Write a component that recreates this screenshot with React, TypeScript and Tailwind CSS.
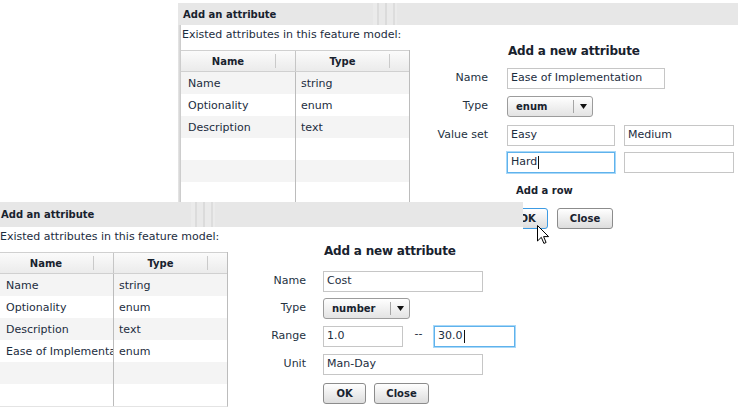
import React from 'react';

type Row = { name: string; type: string };

const TitleBar = ({ height }: { height: string }) => (
  <div className={`flex items-center bg-[#e7e7e7] ${height}`}>
    <span className="w-[195px] pl-[5px] text-[10px] font-bold text-[#18222e]">Add an attribute</span>
    {/* grip strips in the title bar */}
    <div className="flex h-full">
      <span className="w-[4px] bg-[#ebebeb]" />
      <span className="w-[2px] bg-[#dcdcdc]" />
      <span className="w-[6px] bg-[#e9e9e9]" />
      <span className="w-[2px] bg-[#dbdbdb]" />
      <span className="w-[6px] bg-[#eaeaea]" />
      <span className="w-[2px] bg-[#dddddd]" />
      <span className="w-[2px] bg-[#ebebeb]" />
    </div>
  </div>
);

const AttrTable = ({ rows, count, last }: { rows: Row[]; count: number; last?: boolean }) => {
  const all = Array.from({ length: count }, (_, i) => rows[i] ?? { name: '', type: '' });
  return (
    <div className={`w-[229px] border-r border-[#bcbcbc] ${last ? 'border-b border-b-[#e4e4e4]' : ''}`}>
      <div className="flex h-[22px] border-y border-[#d0d0d0] bg-linear-to-b from-[#fbfbfb] to-[#ebebeb] text-[10px] font-bold text-[#18222e]">
        <div className="flex w-[115px] items-center border-r border-[#c6c6c6]">
          <span className="flex-1 text-center">Name</span>
          <span className="h-[14px] w-px bg-[#cacaca]" />
          <span className="w-[19px]" />
        </div>
        <div className="flex flex-1 items-center">
          <span className="flex-1 text-center">Type</span>
          <span className="h-[14px] w-px bg-[#cacaca]" />
          <span className="w-[19px]" />
        </div>
      </div>
      {all.map((r, i) => (
        <div key={i} className={`flex h-[22px] leading-[23px] ${i % 2 === 0 ? 'bg-[#f4f4f4]' : 'bg-white'}`}>
          <div className="w-[115px] overflow-hidden whitespace-nowrap border-r border-[#bcbcbc] pl-[7px] pr-[4px]">{r.name}</div>
          <div className="flex-1 pl-[5px]">{r.type}</div>
        </div>
      ))}
    </div>
  );
};

const Field = ({ value, w, focused, caret }: { value: string; w: string; focused?: boolean; caret?: boolean }) => (
  <div
    className={`flex h-[21px] items-center border bg-white px-[3px] ${w} ${
      focused ? 'border-[#5fb2ec] shadow-[0_0_0_1px_#a8d8f8]' : 'border-[#c6c6c6]'
    }`}
  >
    <span className="whitespace-nowrap">{value}</span>
    {caret && <span className="ml-px h-[13px] w-px bg-[#111]" />}
  </div>
);

const Select = ({ value, w, textW }: { value: string; w: string; textW: string }) => (
  <div className={`flex h-[21px] items-center rounded-[3px] border border-[#9c9c9c] bg-linear-to-b from-white to-[#e3e3e3] ${w}`}>
    <span className={`pl-[8px] text-[10px] font-bold text-[#18222e] ${textW}`}>{value}</span>
    <span className="h-[13px] w-px bg-[#a6a6a6]" />
    <span className="flex flex-1 justify-center">
      <svg width="7" height="5" viewBox="0 0 7 5">
        <polygon points="0,0 7,0 3.5,5" fill="#111" />
      </svg>
    </span>
  </div>
);

const Btn = ({ label, w, focused }: { label: string; w: string; focused?: boolean }) => (
  <div
    className={`flex h-[21px] items-center justify-center rounded-[3px] border bg-linear-to-b from-white to-[#dddddd] text-[10px] font-bold text-[#18222e] ${w} ${
      focused ? 'border-[#3d9be3]' : 'border-[#8c8c8c]'
    }`}
  >
    {label}
  </div>
);

const FormRow = ({ label, gap, mt, children }: { label: string; gap: string; mt: string; children: React.ReactNode }) => (
  <div className={`flex items-center ${gap} ${mt}`}>
    <span className="w-[78px] text-right text-[#24323f]">{label}</span>
    {children}
  </div>
);

const App = () => {
  const rowsA: Row[] = [
    { name: 'Name', type: 'string' },
    { name: 'Optionality', type: 'enum' },
    { name: 'Description', type: 'text' },
  ];
  const rowsB: Row[] = [...rowsA, { name: 'Ease of Implementation', type: 'enum' }];

  return (
    <div className="relative h-[412px] w-[738px] overflow-hidden bg-white font-['DejaVu_Sans',Verdana,sans-serif] text-[11px] text-[#1c2d3e]">
      {/* first dialog, partly hidden */}
      <div className="absolute left-[178px] top-[3px] w-[580px] bg-white">
        <TitleBar height="h-[22px]" />
        <div className="flex h-[212px]">
          <div className="w-[3px] bg-linear-to-r from-[#e8e8e8] to-[#c8c8c8]" />
          <div className="w-[229px]">
            <div className="pl-px pt-[3px] leading-[14px]">Existed attributes in this feature model:</div>
            <div className="mt-[8px]">
              <AttrTable rows={rowsA} count={7} />
            </div>
          </div>
          <div className="flex flex-col pt-[19px]">
            <div className="pl-[98px] text-[12px] leading-[14px] font-bold tracking-[-0.2px] text-[#18222e]">Add a new attribute</div>
            <FormRow label="Name" gap="gap-[19px]" mt="mt-[10px]">
              <Field value="Ease of Implementation" w="w-[158px]" />
            </FormRow>
            <FormRow label="Type" gap="gap-[19px]" mt="mt-[7px]">
              <Select value="enum" w="w-[86px]" textW="w-[65px]" />
            </FormRow>
            <FormRow label="Value set" gap="gap-[19px]" mt="mt-[8px]">
              <div className="flex gap-[9px]">
                <Field value="Easy" w="w-[108px]" />
                <Field value="Medium" w="w-[110px]" />
              </div>
            </FormRow>
            <FormRow label="" gap="gap-[19px]" mt="mt-[6px]">
              <div className="flex gap-[9px]">
                <Field value="Hard" w="w-[108px]" focused caret />
                <Field value="" w="w-[110px]" />
              </div>
            </FormRow>
            <div className="mt-[11px] pl-[106px] text-[10px] leading-[14px] font-bold text-[#18222e]">Add a row</div>
            <div className="mt-[10px] flex gap-[9px] pl-[97px]">
              <Btn label="OK" w="w-[41px]" focused />
              <Btn label="Close" w="w-[56px]" />
            </div>
          </div>
        </div>
      </div>

      {/* second dialog, in front */}
      <div className="absolute left-[-4px] top-[202px] h-[212px] w-[527px] bg-white">
        <TitleBar height="h-[25px]" />
        <div className="flex">
          <div className="w-[3px] bg-linear-to-r from-[#e8e8e8] to-[#c8c8c8]" />
          <div className="w-[229px]">
            <div className="pl-px pt-[3px] leading-[14px]">Existed attributes in this feature model:</div>
            <div className="mt-[8px]">
              <AttrTable rows={rowsB} count={6} last />
            </div>
          </div>
          <div className="flex flex-col pt-[17px]">
            <div className="pl-[96px] text-[12px] leading-[14px] font-bold tracking-[-0.2px] text-[#18222e]">Add a new attribute</div>
            <FormRow label="Name" gap="gap-[17px]" mt="mt-[13px]">
              <Field value="Cost" w="w-[160px]" />
            </FormRow>
            <FormRow label="Type" gap="gap-[17px]" mt="mt-[6px]">
              <Select value="number" w="w-[87px]" textW="w-[66px]" />
            </FormRow>
            <FormRow label="Range" gap="gap-[17px]" mt="mt-[7px]">
              <div className="flex items-center">
                <Field value="1.0" w="w-[80px]" />
                <span className="w-[31px] pb-[4px] text-center">--</span>
                <Field value="30.0" w="w-[81px]" focused caret />
              </div>
            </FormRow>
            <FormRow label="Unit" gap="gap-[17px]" mt="mt-[7px]">
              <Field value="Man-Day" w="w-[160px]" />
            </FormRow>
            <div className="mt-[8px] flex gap-[8px] pl-[95px]">
              <Btn label="OK" w="w-[43px]" />
              <Btn label="Close" w="w-[55px]" />
            </div>
          </div>
        </div>
      </div>

      {/* mouse pointer */}
      <svg className="absolute left-[537px] top-[225px]" width="13" height="20" viewBox="0 0 13 20">
        <path d="M0.5 0.5 V16 L4.3 12.3 L6.9 18.4 L9.1 17.5 L6.6 11.6 H11.6 Z" fill="white" stroke="black" strokeLinejoin="round" />
      </svg>
    </div>
  );
};

export default App;
